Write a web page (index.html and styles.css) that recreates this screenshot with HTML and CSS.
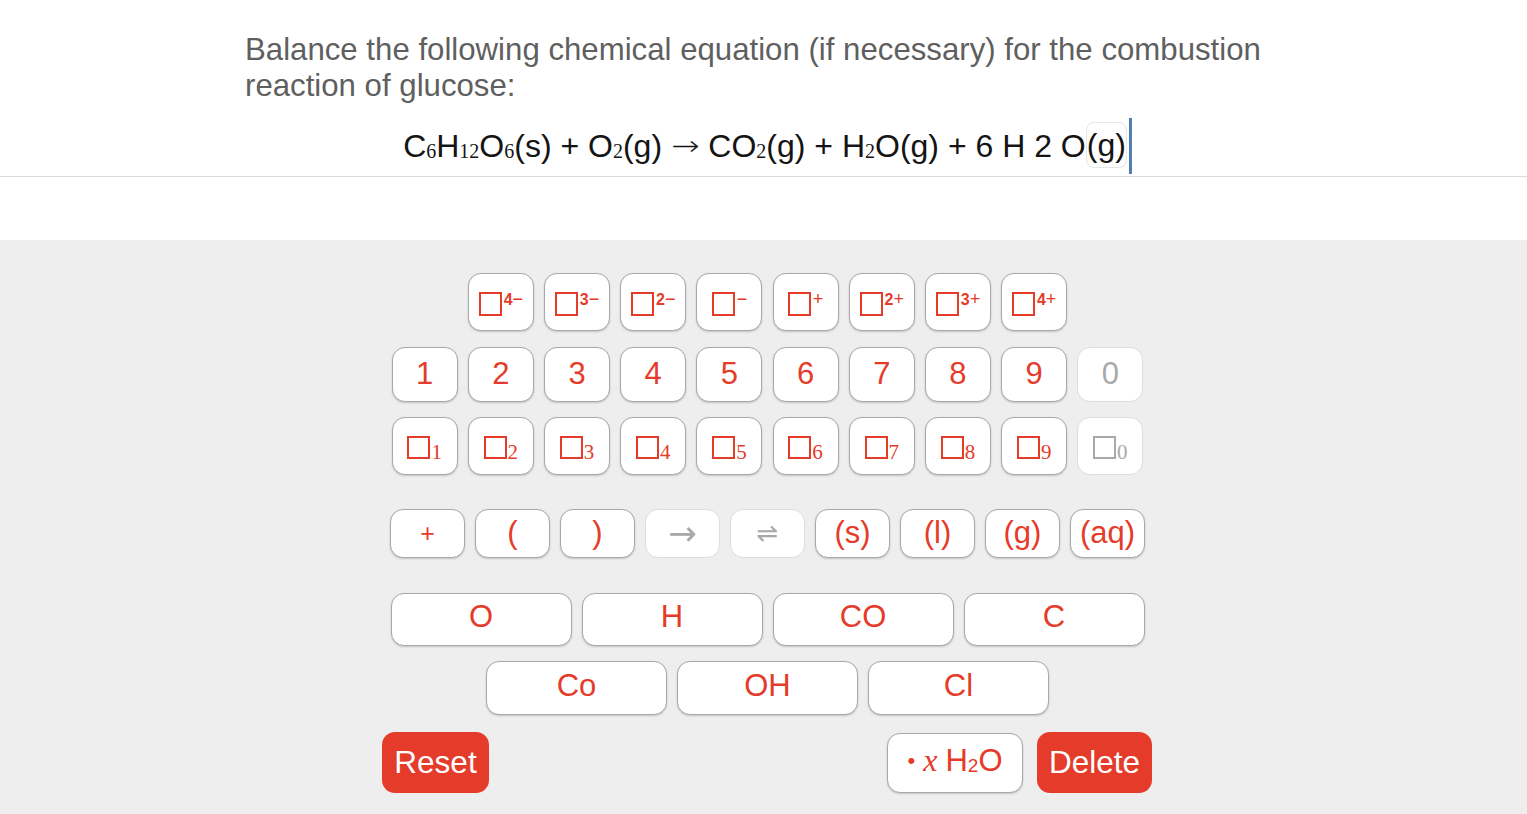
FILE: index.html
```html
<!DOCTYPE html>
<html>
<head>
<meta charset="utf-8">
<link rel="stylesheet" href="styles.css">
</head>
<body>
<div class="top">
  <div class="question">Balance the following chemical equation (if necessary) for the combustion reaction of glucose:</div>
  <div class="equation"><span>C<sub>6</sub>H<sub>12</sub>O<sub>6</sub>(s) + O<sub>2</sub>(g) <span class="arr">→</span> CO<sub>2</sub>(g) + H<sub>2</sub>O(g) + 6 H 2 O</span><span class="last">(g)</span><span class="cursor"></span></div>
</div>
<div class="pad">
  <div class="row r1">
    <div class="key"><span class="sq"></span><span class="sup">4<span class="sg">−</span></span></div>
    <div class="key"><span class="sq"></span><span class="sup">3<span class="sg">−</span></span></div>
    <div class="key"><span class="sq"></span><span class="sup">2<span class="sg">−</span></span></div>
    <div class="key"><span class="sq"></span><span class="sup"><span class="sg">−</span></span></div>
    <div class="key"><span class="sq"></span><span class="sup"><span class="sg">+</span></span></div>
    <div class="key"><span class="sq"></span><span class="sup">2<span class="sg">+</span></span></div>
    <div class="key"><span class="sq"></span><span class="sup">3<span class="sg">+</span></span></div>
    <div class="key"><span class="sq"></span><span class="sup">4<span class="sg">+</span></span></div>
  </div>
  <div class="row r2">
    <div class="key num">1</div>
    <div class="key num">2</div>
    <div class="key num">3</div>
    <div class="key num">4</div>
    <div class="key num">5</div>
    <div class="key num">6</div>
    <div class="key num">7</div>
    <div class="key num">8</div>
    <div class="key num">9</div>
    <div class="key num off">0</div>
  </div>
  <div class="row r3">
    <div class="key"><span class="sqs"></span><span class="subn">1</span></div>
    <div class="key"><span class="sqs"></span><span class="subn">2</span></div>
    <div class="key"><span class="sqs"></span><span class="subn">3</span></div>
    <div class="key"><span class="sqs"></span><span class="subn">4</span></div>
    <div class="key"><span class="sqs"></span><span class="subn">5</span></div>
    <div class="key"><span class="sqs"></span><span class="subn">6</span></div>
    <div class="key"><span class="sqs"></span><span class="subn">7</span></div>
    <div class="key"><span class="sqs"></span><span class="subn">8</span></div>
    <div class="key"><span class="sqs"></span><span class="subn">9</span></div>
    <div class="key off"><span class="sqs"></span><span class="subn">0</span></div>
  </div>
  <div class="row r4">
    <div class="key wide plus">+</div>
    <div class="key wide">(</div>
    <div class="key wide">)</div>
    <div class="key wide off arrow">→</div>
    <div class="key wide off eq">⇌</div>
    <div class="key wide">(s)</div>
    <div class="key wide">(l)</div>
    <div class="key wide">(g)</div>
    <div class="key wide">(aq)</div>
  </div>
  <div class="row r5">
    <div class="key el">O</div>
    <div class="key el">H</div>
    <div class="key el">CO</div>
    <div class="key el">C</div>
  </div>
  <div class="row r6">
    <div class="key el">Co</div>
    <div class="key el">OH</div>
    <div class="key el">Cl</div>
  </div>
  <div class="row r7">
    <div class="btn red reset">Reset</div>
    <div class="right">
      <div class="key water"><span class="dot">•</span><span class="xi">x</span><span>H<span class="wsub">2</span>O</span></div>
      <div class="btn red del">Delete</div>
    </div>
  </div>
</div>
</body>
</html>
```
FILE: styles.css
```css
html, body {
  margin: 0;
  padding: 0;
}
body {
  background: #eeeeee;
  font-family: "Liberation Sans", Arial, sans-serif;
  width: 1527px;
  height: 814px;
  overflow: hidden;
}
.top {
  background: #ffffff;
  height: 240px;
  box-sizing: border-box;
  padding-top: 32px;
}
.question {
  margin-left: 245px;
  width: 1060px;
  font-size: 31.2px;
  line-height: 36px;
  color: #5f5f5f;
}
.equation {
  margin-top: 13px;
  height: 60px;
  border-bottom: 1px solid #dcdcdc;
  display: flex;
  justify-content: center;
  align-items: center;
  padding-left: 8px;
  padding-bottom: 3px;
  font-size: 32px;
  color: #141414;
  box-sizing: border-box;
}
.equation sub {
  font-family: "Liberation Serif", "Times New Roman", serif;
  font-size: 20px;
  vertical-align: -1px;
  line-height: 0;
}
.equation .arr {
  font-family: "DejaVu Sans", sans-serif;
  font-size: 34px;
  font-weight: 200;
  display: inline-block;
  transform: scaleY(0.8);
}
.equation .last {
  border: 1px solid #e6e6e6;
  border-radius: 8px;
  padding: 4px 0;
  line-height: 36px;
}
.equation .cursor {
  width: 3px;
  height: 56px;
  background: #4f7fb3;
  margin-left: 2px;
  margin-top: 2px;
}
.pad {
  padding-top: 33px;
  width: 770px;
  margin-left: 382px;
}
.row {
  display: flex;
  justify-content: center;
  padding: 0 7px 0 8px;
}
.key {
  background: #ffffff;
  border: 1px solid #a8a8a8;
  box-shadow: 0 1px 2px rgba(0, 0, 0, 0.18);
  border-radius: 13px;
  box-sizing: border-box;
  display: flex;
  align-items: center;
  justify-content: center;
  color: #e53b2a;
  font-size: 31px;
}
.key.off {
  border-color: #dddddd;
  box-shadow: none;
  color: #a9a9a9;
}
.r1, .r2, .r3 { gap: 10.2px; }
.r1 .key, .r2 .key, .r3 .key { width: 66px; }
.r1 .key { height: 58px; }
.r2 { margin-top: 16px; }
.r2 .key { height: 55px; }
.r3 { margin-top: 15px; }
.r3 .key { height: 58px; }
.r4 { margin-top: 34px; gap: 10px; }
.r4 .key { width: 75px; height: 49px; }
.r5 { margin-top: 35px; gap: 10px; }
.r5 .key, .r6 .key { width: 181px; height: 53px; padding-bottom: 5px; }
.r6 { margin-top: 15px; gap: 10px; }
.r6 .key { height: 54px; }
.sq {
  width: 23px;
  height: 24px;
  border: 2px solid #e53b2a;
  box-sizing: border-box;
  margin-top: 4px;
}
.sup {
  font-size: 16px;
  font-weight: bold;
  align-self: flex-start;
  margin-top: 16px;
  margin-left: 2px;
  display: flex;
  align-items: center;
}
.sg {
  font-weight: normal;
  font-size: 18px;
  margin-top: -1px;
}
.sqs {
  width: 23px;
  height: 23px;
  border: 2px solid #e53b2a;
  box-sizing: border-box;
  margin-top: 3px;
}
.off .sqs { border-color: #a9a9a9; }
.subn {
  font-family: "Liberation Serif", "Times New Roman", serif;
  font-size: 21px;
  align-self: flex-end;
  margin-bottom: 9px;
  margin-left: 1px;
}
.num { padding-bottom: 2px; }
.plus { font-size: 25px; }
.arrow {
  font-family: "DejaVu Sans", sans-serif;
  font-size: 34px;
  padding-bottom: 2px;
}
.eq {
  font-family: "DejaVu Sans", sans-serif;
  font-size: 26px;
}
.r4 .key.wide { padding-bottom: 1px; }
.r7 {
  margin-top: 17px;
  padding: 0;
  justify-content: space-between;
  align-items: center;
}
.right {
  display: flex;
  align-items: center;
  gap: 14px;
}
.btn {
  height: 61px;
  border-radius: 13px;
  display: flex;
  align-items: center;
  justify-content: center;
  font-size: 31.5px;
  color: #ffffff;
  box-sizing: border-box;
}
.red { background: #e53b2a; }
.reset { width: 107px; }
.del { width: 115px; }
.water {
  width: 136px;
  height: 60px;
  gap: 8px;
  padding-bottom: 4px;
}
.dot { font-size: 22px; }
.xi {
  font-family: "Liberation Serif", "Times New Roman", serif;
  font-style: italic;
  font-size: 32px;
}
.wsub {
  font-size: 19px;
  vertical-align: -1px;
}
```
